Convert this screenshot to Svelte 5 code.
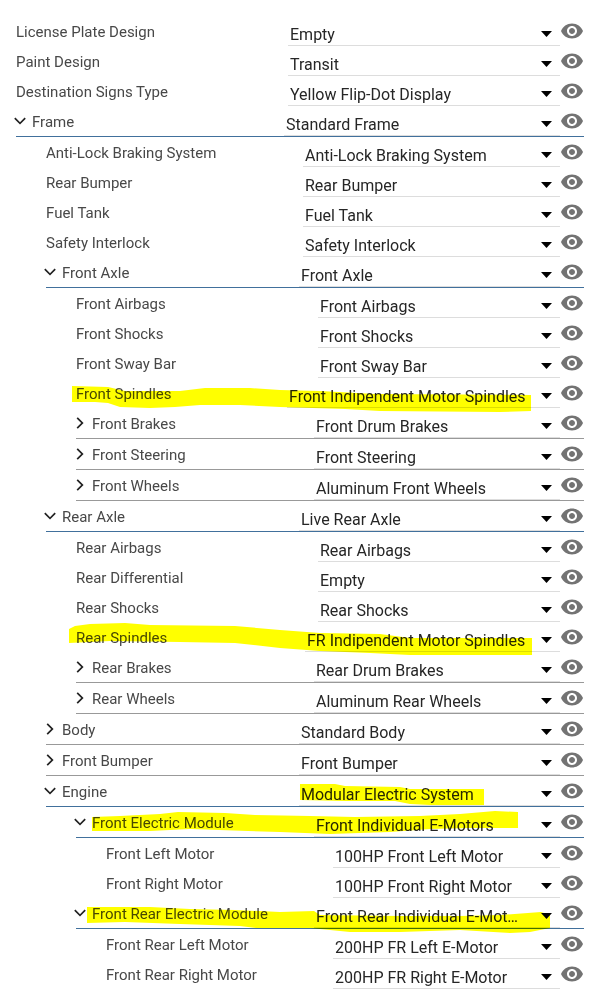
<script>
  let parts = $state([
    { name: 'License Plate Design', value: 'Empty' },
    { name: 'Paint Design', value: 'Transit' },
    { name: 'Destination Signs Type', value: 'Yellow Flip-Dot Display' },
    {
      name: 'Frame',
      value: 'Standard Frame',
      open: true,
      children: [
        { name: 'Anti-Lock Braking System', value: 'Anti-Lock Braking System' },
        { name: 'Rear Bumper', value: 'Rear Bumper' },
        { name: 'Fuel Tank', value: 'Fuel Tank' },
        { name: 'Safety Interlock', value: 'Safety Interlock' },
        {
          name: 'Front Axle',
          value: 'Front Axle',
          open: true,
          children: [
            { name: 'Front Airbags', value: 'Front Airbags' },
            { name: 'Front Shocks', value: 'Front Shocks' },
            { name: 'Front Sway Bar', value: 'Front Sway Bar' },
            { name: 'Front Spindles', value: 'Front Indipendent Motor Spindles', fit: true },
            { name: 'Front Brakes', value: 'Front Drum Brakes', children: [] },
            { name: 'Front Steering', value: 'Front Steering', children: [] },
            { name: 'Front Wheels', value: 'Aluminum Front Wheels', children: [] }
          ]
        },
        {
          name: 'Rear Axle',
          value: 'Live Rear Axle',
          open: true,
          children: [
            { name: 'Rear Airbags', value: 'Rear Airbags' },
            { name: 'Rear Differential', value: 'Empty' },
            { name: 'Rear Shocks', value: 'Rear Shocks' },
            { name: 'Rear Spindles', value: 'FR Indipendent Motor Spindles', fit: true },
            { name: 'Rear Brakes', value: 'Rear Drum Brakes', children: [] },
            { name: 'Rear Wheels', value: 'Aluminum Rear Wheels', children: [] }
          ]
        },
        { name: 'Body', value: 'Standard Body', children: [] },
        { name: 'Front Bumper', value: 'Front Bumper', children: [] },
        {
          name: 'Engine',
          value: 'Modular Electric System',
          open: true,
          children: [
            {
              name: 'Front Electric Module',
              value: 'Front Individual E-Motors',
              open: true,
              children: [
                { name: 'Front Left Motor', value: '100HP Front Left Motor' },
                { name: 'Front Right Motor', value: '100HP Front Right Motor' }
              ]
            },
            {
              name: 'Front Rear Electric Module',
              value: 'Front Rear Individual E-Motors',
              open: true,
              children: [
                { name: 'Front Rear Left Motor', value: '200HP FR Left E-Motor' },
                { name: 'Front Rear Right Motor', value: '200HP FR Right E-Motor' }
              ]
            }
          ]
        }
      ]
    }
  ]);

  // freehand marker strokes over the parts that changed
  const strokes = [
    'M72 386L108 387L125 391L180 391L205 388L250 388L280 390L320 391L375 394L531 395V411L500 412L380 411L345 409L280 407L240 405L200 405L175 407L150 408L120 407L108 403L95 402H72Z',
    'M69 629L75 626L90 624L125 623L150 625L235 626L280 630L320 633L380 634L410 638H532V655L410 655L370 653L320 651L280 648L235 643L180 642L110 641L69 643Z',
    'M300 784H335L345 786L400 787L410 789H484V805L430 805L410 804L395 801L345 801L300 800Z',
    'M92 817L120 816L160 814L178 812L225 813L255 815L310 816L355 817L420 816L460 814L495 811L518 812V828L470 828L430 829L390 832L330 834L280 832L248 831L190 829L150 831H92Z',
    'M87 907H150L190 909L235 910L280 912L314 911L320 915L400 916L460 916L500 915L541 912L550 915V928L530 932L510 933L460 930L400 932L350 932L330 930L310 928L256 928L240 926L180 924L125 922L87 923Z'
  ];
</script>

{#snippet tree(nodes, path)}
  <ul>
    {#each nodes as node, i}
      {@const id = `${path}-${i}`}
      <li>
        <div class="row" class:branch={node.children} class:open={node.open}>
          {#if node.children}
            <button
              class="toggle"
              aria-label="Toggle {node.name}"
              aria-expanded={!!node.open}
              onclick={() => (node.open = !node.open)}
            >
              <svg viewBox="0 0 24 24" aria-hidden="true">
                {#if node.open}
                  <path d="M16.59 8.59L12 13.17 7.41 8.59 6.2 9.8l5.8 5.8 5.8-5.8z" />
                {:else}
                  <path d="M8.59 16.59L13.17 12 8.59 7.41 9.8 6.2l5.8 5.8-5.8 5.8z" />
                {/if}
              </svg>
            </button>
          {/if}
          <label for={id}>{node.name}</label>
          <div class="picker" class:fit={node.fit}>
            <select {id} bind:value={node.value}>
              <option value={node.value}>{node.value}</option>
            </select>
            <svg class="arrow" viewBox="0 0 11 6" aria-hidden="true">
              <path d="M0 0h11L5.5 6z" />
            </svg>
          </div>
          <button
            class="eye"
            class:off={node.hidden}
            aria-label="Show {node.name}"
            aria-pressed={!node.hidden}
            onclick={() => (node.hidden = !node.hidden)}
          >
            <svg viewBox="0 0 24 24" aria-hidden="true">
              <path d="M12 4.5C7 4.5 2.73 7.61 1 12c1.73 4.39 6 7.5 11 7.5s9.27-3.11 11-7.5c-1.73-4.39-6-7.5-11-7.5zM12 17c-2.76 0-5-2.24-5-5s2.24-5 5-5 5 2.24 5 5-2.24 5-5 5zm0-8c-1.66 0-3 1.34-3 3s1.34 3 3 3 3-1.34 3-3-1.34-3-3-3z" />
            </svg>
          </button>
        </div>
        {#if node.open && node.children.length}
          {@render tree(node.children, id)}
        {/if}
      </li>
    {/each}
  </ul>
{/snippet}

<main class="parts">
  {@render tree(parts, 'part')}
  <svg class="marker" viewBox="0 0 591 997" preserveAspectRatio="none" aria-hidden="true">
    {#each strokes as d}
      <path {d} />
    {/each}
  </svg>
</main>

<style>
  :global(body) {
    margin: 0;
    background: #fff;
  }

  .parts {
    position: relative;
    padding: 16px 7px 8px 16px;
    font-family: Roboto, sans-serif;
  }

  ul {
    margin: 0;
    padding: 0;
    list-style: none;
  }

  ul ul {
    margin-left: 30px;
  }

  .row {
    display: flex;
    align-items: center;
    height: 30px;
  }

  .branch {
    border-bottom: 1px solid #999;
  }

  .branch.open {
    border-bottom-color: #41709c;
  }

  button {
    flex: none;
    width: 24px;
    height: 24px;
    padding: 0;
    border: 0;
    background: none;
    cursor: pointer;
  }

  button svg {
    display: block;
    width: 24px;
    height: 24px;
  }

  .toggle {
    margin-left: -8px;
    fill: #222;
  }

  .eye {
    fill: #737373;
  }

  .eye.off {
    opacity: 0.4;
  }

  label {
    flex: 1;
    min-width: 0;
    padding-top: 2px;
    color: #484848;
    font-size: 15px;
    line-height: 28px;
    white-space: nowrap;
  }

  .picker {
    position: relative;
    flex: none;
    width: calc(50% - 12px);
    height: 30px;
  }

  .branch .picker {
    width: calc(50% - 8px);
  }

  .picker.fit {
    width: auto;
  }

  select {
    display: block;
    box-sizing: border-box;
    width: 100%;
    height: 30px;
    margin: 0;
    padding: 8px 34px 0 2px;
    border: 0;
    border-bottom: 1px solid #ddd;
    border-radius: 0;
    background: none;
    color: #262626;
    font-family: inherit;
    font-size: 16px;
    text-overflow: ellipsis;
    appearance: none;
  }

  .arrow {
    position: absolute;
    top: 15px;
    right: 8px;
    width: 11px;
    height: 6px;
    pointer-events: none;
  }

  .marker {
    position: absolute;
    inset: 0;
    width: 100%;
    height: 100%;
    fill: #ff0;
    mix-blend-mode: multiply;
    pointer-events: none;
  }
</style>
